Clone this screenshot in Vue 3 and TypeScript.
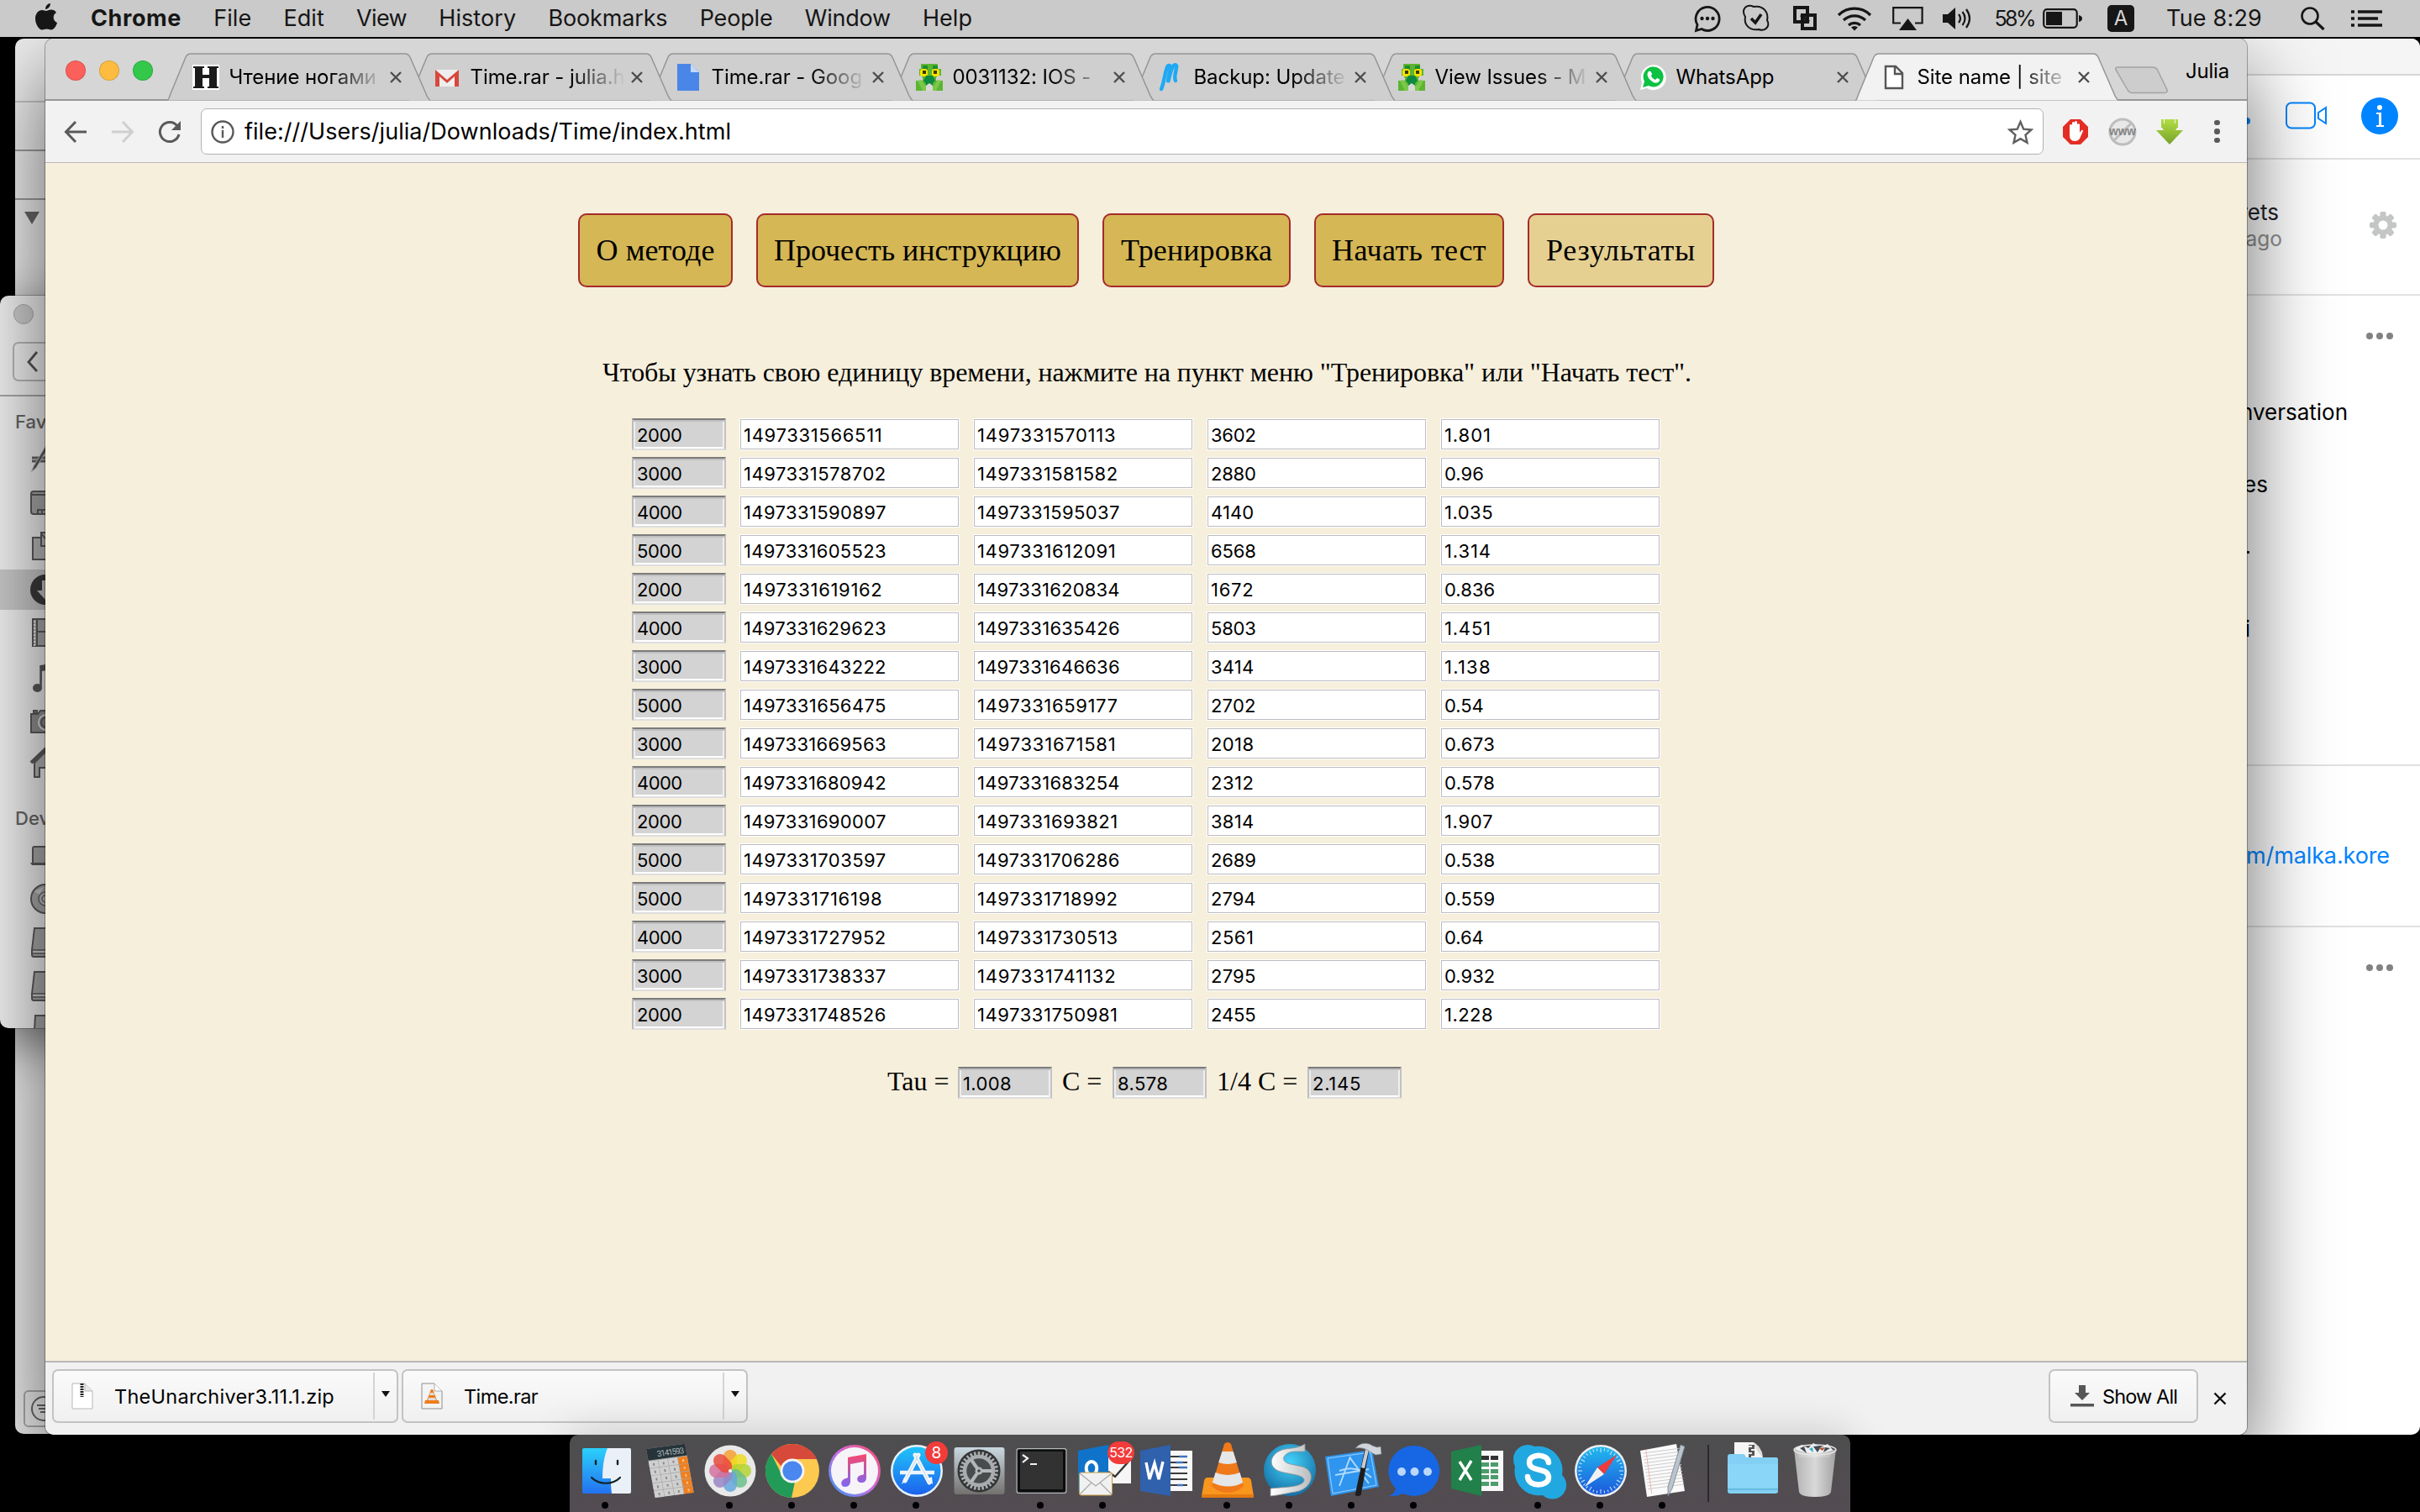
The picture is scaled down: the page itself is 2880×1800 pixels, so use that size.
<script setup lang="ts">
interface MenuItem { label: string; width: number }
interface Tab { title: string; icon: string; active?: boolean }
interface DockApp { name: string; art: string; running?: boolean; badge?: string }

/* Spreads the letters of an element so that its text spans the given width. */
const vFit = {
  mounted(el: HTMLElement, binding: { value: number }) {
    const count = (el.textContent ?? '').trim().length
    if (!count) return
    const natural = el.getBoundingClientRect().width
    el.style.letterSpacing = `${(binding.value - natural) / count}px`
  },
}

/* Width of a number in the form fields: the one and the point are narrower. */
const advance = (value: string): number =>
  [...value].reduce((sum, c) => sum + (c === '.' ? 6.6 : c === '1' ? 11.2 : 13.4), 0)

const menu: MenuItem[] = [
  { label: 'Chrome', width: 108 },
  { label: 'File', width: 45 },
  { label: 'Edit', width: 48.5 },
  { label: 'View', width: 60 },
  { label: 'History', width: 92 },
  { label: 'Bookmarks', width: 142 },
  { label: 'People', width: 87 },
  { label: 'Window', width: 102 },
  { label: 'Help', width: 59 },
]

const mantis = `<path d="M6 0h20v6h4v10h-6v4h8v12H0V20h8v-4H4V6h2z" fill="#5cb531"/><path d="M0 14h7v6H0zM25 14h7v6h-7z" fill="#cfcfcf"/><path d="M8 2h6v6H8zM20 2h6v6h-6zM12 16h8v10h-8z" fill="#1f8d2c"/><rect x="5" y="6" width="9" height="9" rx="3" fill="#f4e300"/><rect x="19" y="6" width="9" height="9" rx="3" fill="#f4e300"/><rect x="8" y="8" width="4" height="4" fill="#3a3a00"/><rect x="21" y="8" width="4" height="4" fill="#3a3a00"/><path d="M12 14h8l3 6-6 6h-3l-5-6z" fill="#0e8a3e"/><path d="M2 20l6 12h8L6 19zM30 20l-6 12h-7l9-13z" fill="#7cc84a"/><path d="M12 26l4-3 4 3v6h-8z" fill="#d8d8d8"/>`

const tabs: Tab[] = [
  { title: 'Чтение ногами', icon: `<rect width="32" height="30" y="1" fill="#fff"/><path d="M1 3h13v2h-2v8h8V5h-2V3h13v2h-2v22h2v2H18v-2h2V17h-8v10h2v2H1v-2h2V5H1z" fill="#1b1b1b"/>` },
  { title: 'Time.rar - julia.h', icon: `<path d="M2 7h28v20H2z" fill="#eee"/><path d="M2 27V7l14 12L30 7v20h-5V15l-9 8-9-8v12z" fill="#d8473b"/>` },
  { title: 'Time.rar - Goog', icon: `<path d="M3 0h16l10 10v22H3z" fill="#4a86e8"/><path d="M19 0l10 10h-10z" fill="#c5d8fa"/>` },
  { title: '0031132: IOS -', icon: mantis },
  { title: 'Backup: Update', icon: `<path d="M5 30C8 24 9 12 12 4c1-3 4-3 4 1-1 6-3 12-3 17C15 15 16 8 19 3c2-3 5-2 4 2-1 6-3 11-1 15" fill="none" stroke="#1fa9f4" stroke-width="4.400" stroke-linecap="round"/>` },
  { title: 'View Issues - M', icon: mantis },
  { title: 'WhatsApp', icon: `<path d="M1 31l2-9A15 15 0 1 1 9 29z" fill="#fff"/><path d="M4 28l2-7a12 12 0 1 1 5 5z" fill="#0dc143"/><path d="M11 9c2-1 3 0 4 3 0 1-1 2-1 2 1 3 3 4 5 5l2-2c2 1 4 1 3 3-2 4-7 3-10 0-4-3-6-8-3-11z" fill="#fff"/>` },
  { title: 'Site name | site', active: true, icon: `<path d="M6 3h12l8 8v18H6zM17 3v9h9" fill="#fff" stroke="#555" stroke-width="2.400"/>` },
]

const pages = [
  { label: 'О методе', width: 184, text: 141 },
  { label: 'Прочесть инструкцию', width: 384, text: 342 },
  { label: 'Тренировка', width: 224, text: 180 },
  { label: 'Начать тест', width: 226, text: 184 },
  { label: 'Результаты', width: 222, text: 178, current: true },
]

const rows: string[][] = [
  ['2000', '1497331566511', '1497331570113', '3602', '1.801'],
  ['3000', '1497331578702', '1497331581582', '2880', '0.96'],
  ['4000', '1497331590897', '1497331595037', '4140', '1.035'],
  ['5000', '1497331605523', '1497331612091', '6568', '1.314'],
  ['2000', '1497331619162', '1497331620834', '1672', '0.836'],
  ['4000', '1497331629623', '1497331635426', '5803', '1.451'],
  ['3000', '1497331643222', '1497331646636', '3414', '1.138'],
  ['5000', '1497331656475', '1497331659177', '2702', '0.54'],
  ['3000', '1497331669563', '1497331671581', '2018', '0.673'],
  ['4000', '1497331680942', '1497331683254', '2312', '0.578'],
  ['2000', '1497331690007', '1497331693821', '3814', '1.907'],
  ['5000', '1497331703597', '1497331706286', '2689', '0.538'],
  ['5000', '1497331716198', '1497331718992', '2794', '0.559'],
  ['4000', '1497331727952', '1497331730513', '2561', '0.64'],
  ['3000', '1497331738337', '1497331741132', '2795', '0.932'],
  ['2000', '1497331748526', '1497331750981', '2455', '1.228'],
]

const totals = [
  { label: 'Tau =', value: '1.008', width: 84 },
  { label: 'C =', value: '8.578', width: 72 },
  { label: '1/4 C =', value: '2.145', width: 120 },
]

const petals = ['#f5a030', '#f0dd20', '#b5d334', '#6cbf8a', '#67a7dc', '#9a86c4', '#d4719f', '#ea4a3c']
  .map((c, i) => `<rect x="24" y="7" width="16" height="25" rx="8" fill="${c}" opacity=".85" transform="rotate(${i * 45} 32 32)"/>`)
  .join('')
const teeth = Array.from({ length: 28 }, (_, i) => `<rect x="30.700" y="9" width="2.600" height="6" fill="#a9acae" transform="rotate(${i * 360 / 28} 32 32)"/>`).join('')
const ticks = Array.from({ length: 36 }, (_, i) => `<rect x="31.5" y="5" width="1" height="${i % 3 ? 3 : 5}" fill="#d5ecff" transform="rotate(${i * 10} 32 32)"/>`).join('')
const calcKeys = [0, 1, 2, 3, 4].map(r => [0, 1, 2, 3].map(c =>
  `<rect x="${c * 12}" y="${15 + r * 9}" width="11.3" height="8.3" fill="${c === 3 ? '#f0801f' : '#cfcfcf'}"/><rect x="${c * 12 + 4.8}" y="${18 + r * 9}" width="2" height="3" fill="${c === 3 ? '#f9c08d' : '#8a8a8a'}"/>`).join('')).join('')
const lines = Array.from({ length: 12 }, (_, i) => `<path d="M5 ${11 + i * 4}h44" stroke="#c9c9c9" stroke-width=".9"/>`).join('')

const apps: DockApp[] = [
  { name: 'finder', running: true, art: `<defs><linearGradient id="fi" x2="0" y2="1"><stop stop-color="#2bd0fb"/><stop offset="1" stop-color="#2372f0"/></linearGradient></defs><rect x="4" y="5" width="58" height="54" rx="2" fill="url(#fi)"/><path d="M34 5h26q2 0 2 2v50q0 2-2 2H39c-1-7-1-12-1-18H28C28 27 30 14 34 5z" fill="#eaf0f8"/><path d="M20 20v4M46 20v4" stroke="#122" stroke-width="2.4" stroke-linecap="round"/><path d="M15 40c9 9 25 9 34 0" fill="none" stroke="#122" stroke-width="2.2" stroke-linecap="round"/>` },
  { name: 'calculator', art: `<g transform="matrix(.97 -.13 .18 .98 6 6)"><rect width="47.5" height="59" fill="#a8a8a8"/><rect width="47.5" height="14" fill="#26343a"/>${calcKeys}<text x="12" y="11" font-size="10" fill="#a9b6b8" font-family="Roboto, sans-serif" textLength="33">3141593</text></g>` },
  { name: 'photos', running: true, art: `<circle cx="32" cy="32" r="30.5" fill="#e9e9e9"/>${petals}<circle cx="32" cy="32" r="2" fill="#fff"/>` },
  { name: 'chrome', running: true, art: `<circle cx="32" cy="32" r="32" fill="#fdc94f"/><path d="M32 0a32 32 0 0 1 29 18H32a14 14 0 0 0-13 9L7 12A32 32 0 0 1 32 0z" fill="#d6493b"/><path d="M7 12l13 26q5 8 15 7L31 64A32 32 0 0 1 7 12z" fill="#229a58"/><circle cx="32" cy="32" r="14.5" fill="#f4f4f4"/><circle cx="32" cy="32" r="11.6" fill="#4a87ee"/>` },
  { name: 'itunes', running: true, art: `<defs><linearGradient id="it" x1="1" y1="0" x2="0" y2="1"><stop stop-color="#fb4f6b"/><stop offset=".5" stop-color="#c96be0"/><stop offset="1" stop-color="#2f9cf8"/></linearGradient><linearGradient id="no" x2="0" y2="1"><stop stop-color="#f9486c"/><stop offset="1" stop-color="#7c68f6"/></linearGradient></defs><circle cx="32" cy="32" r="31" fill="url(#it)"/><circle cx="32" cy="32" r="28" fill="#f6f4f9"/><path d="M24 16l22-4v28c0 4-2 6-6 6-7 0-6-9 1-9l2-1V21l-16 3v20c0 4-2 7-6 7-7 0-6-9 1-10l2-1z" fill="url(#no)"/>` },
  { name: 'appstore', running: true, badge: '8', art: `<defs><linearGradient id="as" x2="0" y2="1"><stop stop-color="#20c4fb"/><stop offset="1" stop-color="#1c62ec"/></linearGradient></defs><circle cx="32" cy="32" r="31" fill="#e9f2fa"/><circle cx="32" cy="32" r="28.5" fill="url(#as)"/><path d="M12 34h41" stroke="#eef5fc" stroke-width="4.5"/><path d="M34 13L18 44M30 13l17 33" stroke="#f4f8fc" stroke-width="5" stroke-linecap="round"/><path d="M34 13L18 44M30 13l17 33" stroke="#b7cbe0" stroke-width=".8"/><path d="M17 40l-3 8 6-5zM44 42l7 6-1-9z" fill="#f4f8fc"/>` },
  { name: 'settings', art: `<defs><linearGradient id="se" x2="0" y2="1"><stop stop-color="#c9d8e0"/><stop offset="1" stop-color="#73716e"/></linearGradient></defs><rect x="2.5" y="4" width="60" height="56" rx="3" fill="url(#se)"/><circle cx="32" cy="32" r="25.500" fill="#333536"/>${teeth}<circle cx="32" cy="32" r="17" fill="#4a4b4c" stroke="#a9acae" stroke-width="4.500"/><path d="M32 32l-9-13M32 32h16M32 32l-9 13" stroke="#b4b7b9" stroke-width="4"/><circle cx="32" cy="32" r="4.500" fill="#b4b7b9"/><circle cx="32" cy="32" r="1.800" fill="#444"/>` },
  { name: 'terminal', running: true, art: `<rect x="2.5" y="5" width="60" height="54" rx="3" fill="#b5bcbc"/><rect x="3.7" y="6.2" width="57.6" height="51.6" rx="2" fill="#0d0d0d"/><rect x="7" y="9" width="51" height="45" fill="#323232"/><path d="M10 13l6 4-6 5M19 24h8" fill="none" stroke="#f2f2f2" stroke-width="2.2"/>` },
  { name: 'outlook', running: true, badge: '532', art: `<path d="M36 11h29v36H36z" fill="#f6f6f6"/><path d="M38 33l8 6 16-18" fill="none" stroke="#333" stroke-width="2.4"/><path d="M2 8l36-7v61L2 56z" fill="#0f74c9"/><ellipse cx="18" cy="29" rx="6.3" ry="8" fill="none" stroke="#fff" stroke-width="4"/><rect x="3.5" y="34" width="39" height="27" rx="2" fill="#f1f1f1" stroke="#c89a3f" stroke-width="1"/><path d="M4 35l19 15 19-15M4 60l14-14M42 60L28 46" fill="none" stroke="#a9a9a9" stroke-width="1.2"/>` },
  { name: 'word', art: `<rect x="36" y="8" width="28" height="48" fill="#f8f8f8"/><path d="M38 15h20M38 22h20M38 28h20M38 35h20M38 42h20M38 49h20" stroke="#3b3b3b" stroke-width="2.2"/><path d="M48 15h10M44 22h9M48 28h10M46 49h7" stroke="#3f74c0" stroke-width="2.4"/><path d="M2 8l36-7v61L2 56z" fill="#2f61ad"/><path d="M9 22l4 20 6-19 5 19 5-21" fill="none" stroke="#fff" stroke-width="3.4"/>` },
  { name: 'vlc', running: true, art: `<path d="M8 40h48q3 0 4 4l3 18q0 2-2 2H3q-2 0-2-2l3-18q1-4 4-4z" fill="#f9961e"/><path d="M1 60h62v2q0 2-2 2H3q-2 0-2-2z" fill="#e57a10"/><path d="M28 0q4-4 8 0l15 50q-8 8-19 8t-19-8z" fill="#f0791a"/><path d="M25.4 9h13.2l4.2 13q-10.800 4-21.600 0zM17.500 34q14.500 6 29 0l3.700 12q-17 9-36.400 0z" fill="#e4e6e8"/>` },
  { name: 'skim', running: true, art: `<defs><radialGradient id="sk" cy=".35" r=".7"><stop stop-color="#45d3fb"/><stop offset="1" stop-color="#11699f"/></radialGradient><linearGradient id="sg"><stop stop-color="#fff"/><stop offset="1" stop-color="#b9bcbe"/></linearGradient></defs><circle cx="32" cy="31" r="31" fill="url(#sk)"/><path d="M50 0v9H37c-13 1-18 12-4 15l14 3c18 6 11 27-8 30-12 2-20 4-30 5V53l23-2c20-2 22-11 8-14l-15-3C2 30 8 9 27 6c9-1 17-2 23-6z" fill="url(#sg)" stroke="#8a8f93" stroke-width=".8"/>` },
  { name: 'xcode', running: true, art: `<path d="M0 15l56-8 8 44-57 11z" fill="#2f95ee"/><path d="M3 17l51-7 7 39-52 10z" fill="none" stroke="#9bd0ff" stroke-width="1"/><path d="M12 37l40-7M17 50l13-35M30 17l22 30M17 32q20-8 38 8" fill="none" stroke="#aedaff" stroke-width="2"/><path d="M47 7l-11 52q-1 3 3 3t4-3L52 9z" fill="#1d1d1d"/><path d="M48 6l4 1-5 22-4-1z" fill="#c8ccd0"/><path d="M36 5c6-7 15-7 20-3l6 2 4-1 1 9-7 1-7-4c-5-4-11-5-17-4z" fill="#cfd5da" stroke="#7d868d" stroke-width=".7"/>` },
  { name: 'messages', running: true, art: `<path d="M32 2a30 30 0 1 1-13 57q-8 4-17 3 7-3 8-9A30 30 0 0 1 32 2z" fill="#1767e4"/><g fill="#b9d8fb"><circle cx="17" cy="33" r="5"/><circle cx="32.500" cy="33" r="5"/><circle cx="48" cy="33" r="5"/></g>` },
  { name: 'excel', art: `<rect x="36" y="8" width="28" height="48" fill="#f8f8f8"/><path d="M38 14h9v5h-9zM49 14h9v5h-9z" fill="#333"/><path d="M38 22h9v5h-9zM49 22h9v5h-9zM38 30h9v5h-9zM49 30h9v5h-9zM38 37h9v5h-9zM49 37h9v5h-9zM38 45h9v5h-9zM49 45h9v5h-9z" fill="#4d9c6c"/><path d="M2 9l36-8v61L2 53z" fill="#22804a"/><path d="M12 21l14 22M26 20L12 43" stroke="#fff" stroke-width="3.400"/>` },
  { name: 'skype', running: true, art: `<path d="M2 18A17 17 0 0 1 27 3a29 29 0 0 1 33 34 16 16 0 0 1-23 24A29 29 0 0 1 4 27q-2-4-2-9z" fill="#22a8e0"/><path d="M44 22c-1-11-23-11-23 0 0 12 23 5 23 18 0 11-24 12-25-1" fill="none" stroke="#fff" stroke-width="6.500" stroke-linecap="round"/>` },
  { name: 'safari', running: true, art: `<defs><linearGradient id="sa" x2="0" y2="1"><stop stop-color="#22b9ee"/><stop offset="1" stop-color="#1b58dc"/></linearGradient></defs><circle cx="32" cy="32" r="31" fill="#eceff1"/><circle cx="32" cy="32" r="28.500" fill="url(#sa)"/>${ticks}<path d="M51 13L28 28l8 8z" fill="#ee3b3b"/><path d="M13 51l15-23 8 8z" fill="#f1f1f1"/>` },
  { name: 'textedit', running: true, art: `<path d="M5 8L48 0l10 56-45 7z" fill="#fafafa"/><g transform="matrix(.98 -.13 .13 .97 2 1)">${lines}<path d="M9 7v54" stroke="#f1a9a9" stroke-width=".8"/></g><path d="M53 1l5 2-15 50-5 9 0-11z" fill="#b9c4cd" stroke="#717c86" stroke-width=".8"/>` },
]

const folderArt = `<path d="M10 -2h23l11 18v10H10z" fill="#f5f5f5"/><path d="M27 1h7v20h-7z" fill="#555"/><path d="M27 3h4M30 7h4M27 11h4M30 15h4" stroke="#eee" stroke-width="2"/><path d="M33 -2q2 9 11 18l-1-6q-4-9-10-12z" fill="#dcdcdc"/><path d="M2 15q0-3 3-3h15q3 0 4 4h36q2 0 2 3v37q0 3-3 3H5q-3 0-3-3z" fill="#83d0f4"/><path d="M2 24h60v28H2z" fill="#8ad6f8"/><path d="M2 54h60" stroke="#5fb4dc" stroke-width="1.500"/>`
const trashArt = `<defs><linearGradient id="tr"><stop stop-color="#b9b9b9"/><stop offset=".5" stop-color="#e3e3e3"/><stop offset="1" stop-color="#a9a9a9"/></linearGradient></defs><path d="M8 6l8-5 8 4 6-6 9 5 8-4 7 8-5 8H13z" fill="#efefef"/><path d="M7 6q25 10 50 0l-6 51q-1 6-19 6t-19-6z" fill="url(#tr)" opacity=".93"/><path d="M14 5l8 6-3-8zM30 3l5 7 5-8zM44 4l-2 6 8-5z" fill="#3f4a55"/><path d="M36 5l5 3 3-4z" fill="#b05a3a"/><path d="M25 6l5 4-1-6z" fill="#38a8c8"/><ellipse cx="32" cy="7" rx="25" ry="6" fill="none" stroke="#e6e6e6" stroke-width="1.500"/>`

const finderIcons = [
  { top: 528, art: `<path d="M2 17h16M2 21h16" stroke="#666" stroke-width="3"/><path d="M20 0L4 27l-3 7 6-5L22 4z" fill="#5b5b5b" stroke="#ccc"/>` },
  { top: 583, art: `<rect x="1" y="2" width="32" height="27" rx="3" fill="#a9a9a9" stroke="#5b5b5b" stroke-width="2"/><path d="M1 6h20M9 29v-5h12M14 24v5" stroke="#5b5b5b" stroke-width="2" fill="none"/>` },
  { top: 633, art: `<path d="M3 7h10v10h12v16H3z" fill="#bbb" stroke="#5b5b5b" stroke-width="2"/><path d="M13 1h14v16H13zM13 2l8 10" fill="#bbb" stroke="#5b5b5b" stroke-width="2"/>` },
  { top: 684, art: `<circle cx="18" cy="18" r="18" fill="#3b3b3b"/><path d="M14 7h8v12h6L18 30 8 19h6z" fill="#c4c4c4"/>` },
  { top: 736, art: `<path d="M3 1h30v32H3zM8 1v32M8 16h20" fill="#aaa" stroke="#5b5b5b" stroke-width="2"/><path d="M5 3v30" stroke="#eee" stroke-width="2" stroke-dasharray="2 2"/>` },
  { top: 790, art: `<path d="M12 2l18-3v7L14 9v19" fill="#5b5b5b"/><path d="M12.500 2v26" stroke="#5b5b5b" stroke-width="2.500"/><ellipse cx="8.500" cy="29" rx="5.500" ry="5" fill="#5b5b5b"/>` },
  { top: 845, art: `<path d="M4 1h4v3H4zM1 5h8l3-4h16v26H1z" fill="#909090" stroke="#5b5b5b" stroke-width="2"/><circle cx="19" cy="15" r="9" fill="#888" stroke="#ddd" stroke-width="2"/><circle cx="19" cy="15" r="6" fill="none" stroke="#555" stroke-width="1.500"/>` },
  { top: 892, art: `<path d="M5 16v17h6V22h12V8L18 3z" fill="#b5b5b5" stroke="#5b5b5b" stroke-width="2"/><path d="M1 16L20-2" stroke="#5b5b5b" stroke-width="4"/>` },
  { top: 1006, art: `<path d="M3 22V4q0-2 2-2h20v20" fill="#aaa" stroke="#5b5b5b" stroke-width="2"/><path d="M0 21h30v3H2z" fill="#5b5b5b"/>` },
  { top: 1052, art: `<circle cx="18" cy="18" r="17" fill="#a9a9a9" stroke="#5b5b5b" stroke-width="2"/><circle cx="18" cy="18" r="8" fill="#bbb" stroke="#666" stroke-width="1.500"/><circle cx="18" cy="18" r="4" fill="none" stroke="#666" stroke-width="1.500"/><path d="M5 9l6 4 5-9" fill="#ccc"/>` },
  { top: 1103, art: `<path d="M5 2h22v34H4q-2 0-2-3v-5z" fill="#aaa" stroke="#5b5b5b" stroke-width="2"/><path d="M3 28h22v4H3" fill="#ccc" stroke="#5b5b5b" stroke-width="1.500"/>` },
  { top: 1155, art: `<path d="M5 2h22v34H4q-2 0-2-3v-5z" fill="#aaa" stroke="#5b5b5b" stroke-width="2"/><path d="M3 28h22v4H3" fill="#ccc" stroke="#5b5b5b" stroke-width="1.500"/>` },
  { top: 1207, art: `<path d="M6 2h22v34H4z" fill="#aaa" stroke="#5b5b5b" stroke-width="2"/>` },
]
</script>

<template>
  <div class="desktop">
    <header class="menubar">
      <svg class="apple" width="26" height="32" viewBox="0 0 26 32"><path d="M18 0c0 4-3 7-6 7 0-4 3-7 6-7zM13 9c1 0 3-1.500 6-1.500 2 0 5 1 6 3.500-5 3-4 10 1 12-1 4-4 8.500-7 8.500-2 0-3-1-5.500-1S10 31.500 8 31.500C4 31.500 0 24 0 18S4 8 8 8c2 0 4 1 5 1z" fill="#161616" /></svg>
      <nav class="menu">
        <span v-for="(m, i) in menu" :key="m.label" v-fit="m.width" :class="{ strong: i === 0 }">{{ m.label }}</span>
      </nav>
      <div class="status">
        <svg width="32" height="32" viewBox="0 0 32 32"><path d="M2.500 30.500l1.500-7A14 14 0 1 1 9 28.500z" fill="none" stroke="#161616" stroke-width="2.800" /><g fill="#161616"><circle cx="9.500" cy="16" r="2.200" /><circle cx="16" cy="16" r="2.200" /><circle cx="22.500" cy="16" r="2.200" /></g></svg>
        <svg style="margin-left: 26px" width="32" height="32" viewBox="0 0 32 32"><path d="M1 8C1 2 7-1 13 2c12-2 18 7 16 16 4 7-2 14-10 11C8 31 1 23 3 14Q1 11 1 8z" fill="none" stroke="#161616" stroke-width="2" /><path d="M10 16l5 5 7-10" fill="none" stroke="#161616" stroke-width="3.600" /></svg>
        <svg style="margin-left: 28px" width="29" height="30" viewBox="0 0 29 30"><path d="M2 2h15v17H2zM11 11h15v16H11z" fill="none" stroke="#161616" stroke-width="4" /><path d="M9 11l10 8" stroke="#161616" stroke-width="3" /></svg>
        <svg style="margin-left: 23px" width="42" height="30" viewBox="0 0 42 30"><g fill="none" stroke="#161616" stroke-width="3.200"><path d="M2 11a27 27 0 0 1 38 0" /><path d="M8 17a19 19 0 0 1 26 0" /><path d="M14 23a10.500 10.500 0 0 1 14 0" /></g><path d="M17 25.500q4-3 8 0l-4 4z" fill="#161616" /></svg>
        <svg style="margin-left: 24px" width="37" height="28" viewBox="0 0 37 28"><path d="M10 19.500H1.200V1.200h34.400v18.300H27" fill="none" stroke="#161616" stroke-width="2.200" /><path d="M18.500 14L29 28H8z" fill="#161616" /></svg>
        <svg style="margin-left: 23px" width="33" height="26" viewBox="0 0 33 26"><path d="M0 8h6l9-8v26l-9-8H0z" fill="#161616" /><g fill="none" stroke="#161616" stroke-width="2.200"><path d="M19 8q4 5 0 10M23.500 5q6 8 0 16" /><path d="M28 2q8 11 0 22" /></g></svg>
        <span v-fit="47.5" class="pct" style="margin-left: 29px">58%</span>
        <svg style="margin-left: 10px" width="47" height="24" viewBox="0 0 47 24"><rect x="1.200" y="1.200" width="39.500" height="21.600" rx="4" fill="none" stroke="#161616" stroke-width="2.200" /><rect x="4" y="4" width="19" height="16" fill="#161616" /><path d="M43 8q4 1 4 4t-4 4z" fill="#161616" /></svg>
        <span class="lang">A</span>
        <span v-fit="114" class="clock">Tue 8:29</span>
        <svg style="margin-left: 46px" width="29" height="28" viewBox="0 0 29 28"><circle cx="11" cy="11" r="9.500" fill="none" stroke="#161616" stroke-width="2.600" /><path d="M18 18l9.500 9" stroke="#161616" stroke-width="3.200" /></svg>
        <svg style="margin-left: 31px" width="37" height="20" viewBox="0 0 37 20"><path d="M0 2h4M8 2h29M0 10h4M8 10h24M0 18h4M8 18h29" stroke="#161616" stroke-width="3.600" /></svg>
      </div>
    </header>

    <section class="window mail">
      <i class="rule" /><i class="rule dark" />
      <i class="tri" />
      <svg class="filter" width="40" height="44" viewBox="0 0 40 44"><rect x="1" y="1" width="60" height="42" rx="5" fill="none" stroke="#a9a9a9" stroke-width="2" /><circle cx="24" cy="22" r="14" fill="none" stroke="#666" stroke-width="2" /><path d="M16 18h20M18 22h16M20 26h14" stroke="#666" stroke-width="2" /></svg>
    </section>

    <section class="window finder">
      <i class="light" />
      <svg class="back" width="60" height="48" viewBox="0 0 60 48"><rect x="1" y="1" width="70" height="45" rx="6" fill="none" stroke="#b5b5b5" stroke-width="2" /><path d="M29 12L19 24l10 11" fill="none" stroke="#555" stroke-width="2.800" /></svg>
      <i class="line" />
      <i class="selected" />
      <span class="group fav">Fav</span>
      <span class="group dev">Dev</span>
      <svg v-for="f in finderIcons" :key="f.top" class="side" :style="{ top: f.top - 352 + 'px' }" width="36" height="38" viewBox="0 0 36 38" v-html="f.art" />
    </section>

    <section class="window chat">
      <div class="chat-title" />
      <div class="chat-bar">
        <i class="tip" />
        <svg width="52" height="34" viewBox="0 0 52 34"><rect x="2" y="1.500" width="34" height="30" rx="6" fill="none" stroke="#0084ff" stroke-width="2" /><path d="M40 13l9-6v19l-9-6z" fill="none" stroke="#0084ff" stroke-width="2" /></svg>
        <svg class="info" width="44" height="44" viewBox="0 0 44 44"><circle cx="22" cy="22" r="22" fill="#0084ff" /><circle cx="22" cy="12" r="3" fill="#fff" /><path d="M18 18h6v15h3v2h-9v-2h3V20h-3z" fill="#fff" /></svg>
      </div>
      <div class="chat-who">
        <div class="names"><span class="who">rets</span><span class="ago">ago</span></div>
        <svg width="32" height="32" viewBox="-16 -16 32 32"><g fill="#c4c6c6"><rect v-for="n in 8" :key="n" x="-3.600" y="-16" width="7.200" height="9" rx="2" :transform="`rotate(${n * 45})`" /></g><circle r="8.500" fill="none" stroke="#c4c6c6" stroke-width="6" /></svg>
      </div>
      <div class="chat-options">
        <span class="dots"><i /><i /><i /></span>
        <span class="opt o1" v-fit="128">nversation</span>
        <span class="opt o2">es</span>
        <i class="mark" />
        <span class="opt o3">i</span>
      </div>
      <div class="chat-link"><span v-fit="171">m/malka.kore</span></div>
      <div class="chat-more"><span class="dots"><i /><i /><i /></span></div>
    </section>

    <main class="window browser">
      <div class="strip">
        <div class="lights"><i class="red" /><i class="amber" /><i class="green" /></div>
        <div class="tabs">
          <div v-for="(t, i) in tabs" :key="i" class="tab" :class="{ active: t.active }" :style="{ zIndex: t.active ? 20 : 10 - i }">
            <svg class="shape" width="313" height="57" viewBox="0 0 313 57"><path d="M0 56.500C2 56 2 54 3 51L22 5Q24 1 28 1H283Q287 1 289 5L309 51Q311 55 313 56.500" /></svg>
            <svg class="favicon" width="32" height="32" viewBox="0 0 32 32" v-html="t.icon" />
            <span class="title" :class="{ whole: t.title === 'WhatsApp' }">{{ t.title }}</span>
            <svg class="close" width="16" height="16" viewBox="0 0 16 16"><path d="M2 2l12 12M14 2L2 14" stroke="#4d4d4d" stroke-width="2.400" /></svg>
          </div>
          <svg class="newtab" width="66" height="33" viewBox="0 0 66 33"><path d="M5 1H46Q50 1 52 5L63 28Q64 31.500 60 31.500H22Q18 31.500 16 28L2 4Q1 1 5 1z" fill="#cdcdcd" stroke="#a2a2a2" stroke-width="1.500" /></svg>
        </div>
        <span v-fit="52" class="profile">Julia</span>
      </div>
      <div class="toolbar">
        <svg class="nav" width="28" height="28" viewBox="0 0 28 28"><path d="M14 2L2.500 14 14 26M3 14h24" fill="none" stroke="#5a5a5a" stroke-width="3" /></svg>
        <svg class="nav fwd" width="28" height="28" viewBox="0 0 28 28"><path d="M14 2l11.500 12L14 26M25 14H1" fill="none" stroke="#cfcfcf" stroke-width="3" /></svg>
        <svg class="nav rel" width="28" height="28" viewBox="0 0 28 28"><path d="M23 7A11.500 11.500 0 1 0 25 17" fill="none" stroke="#5a5a5a" stroke-width="3" /><path d="M27 1v11H16z" fill="#5a5a5a" /></svg>
        <div class="omnibox">
          <svg width="28" height="28" viewBox="0 0 28 28"><circle cx="14" cy="14" r="12.500" fill="none" stroke="#5a5a5a" stroke-width="2.400" /><path d="M14 12v9M14 7v3" stroke="#5a5a5a" stroke-width="2.400" /></svg>
          <span v-fit="579" class="url">file:///Users/julia/Downloads/Time/index.html</span>
          <svg class="star" width="31" height="30" viewBox="0 0 31 30"><path d="M15.500 3l3.700 8.700 9.300.8-7 6.200 2 9.200-8-4.800-8 4.800 2-9.200-7-6.200 9.300-.8z" fill="none" stroke="#5f5f5f" stroke-width="2.400" /></svg>
        </div>
        <div class="ext">
          <svg width="32" height="32" viewBox="0 0 32 32"><path d="M10 1h12l9 9v12l-9 9H10l-9-9V10z" fill="#e32d24" /><path d="M9 14V8q1.500-2 3 0V5q1.500-2 3 0V4q1.500-2 3 0v3q2-1.500 3 0v10l2-3q2-1 2 1l-4 9q-2 3-6 3-6 0-6-7z" fill="#fff" /></svg>
          <svg width="34" height="34" viewBox="0 0 34 34"><circle cx="17" cy="17" r="15" fill="#e8e8e8" stroke="#bdbdbd" stroke-width="3" /><path d="M27 7L7 27" stroke="#bdbdbd" stroke-width="3" /><text x="1" y="21" font-size="14" font-weight="700" fill="#858585" textLength="32" lengthAdjust="spacingAndGlyphs" font-family="Liberation Sans, sans-serif">www</text></svg>
          <svg width="32" height="32" viewBox="0 0 32 32"><defs><linearGradient id="dl" x2="0" y2="1"><stop stop-color="#b2de45" /><stop offset="1" stop-color="#77a22a" /></linearGradient></defs><path d="M6 1h3v5h1V1h12v5h1V1h3v10h-1l-2 3h9L16 31 0 14h9l-2-3H6z" fill="url(#dl)" /></svg>
          <span class="more"><i /><i /><i /></span>
        </div>
      </div>

      <article class="page">
        <nav class="buttons">
          <a v-for="p in pages" :key="p.label" :class="{ current: p.current }" :style="{ width: p.width + 'px' }"><span v-fit="p.text">{{ p.label }}</span></a>
        </nav>
        <p class="hint"><span v-fit="1296">Чтобы узнать свою единицу времени, нажмите на пункт меню "Тренировка" или "Начать тест".</span></p>
        <div class="grid">
          <div v-for="(r, i) in rows" :key="i" class="row">
            <div v-for="(c, j) in r" :key="j" :class="j === 0 ? 'locked' : 'field'"><span v-fit="advance(c)">{{ c }}</span></div>
          </div>
        </div>
        <div class="totals">
          <template v-for="t in totals" :key="t.label">
            <label :style="{ width: t.width + 'px' }">{{ t.label }}</label>
            <div class="locked"><span v-fit="advance(t.value)">{{ t.value }}</span></div>
          </template>
        </div>
      </article>

      <footer class="shelf">
        <div class="download">
          <svg width="26" height="32" viewBox="0 0 26 32"><path d="M1 1h15l9 9v21H1z" fill="#fff" stroke="#b8b8b8" /><path d="M16 1v9h9" fill="#e9e9e9" stroke="#b8b8b8" /><path d="M12.500 1v16" stroke="#222" stroke-width="4" stroke-dasharray="2 1" /></svg>
          <span v-fit="262">TheUnarchiver3.11.1.zip</span>
          <i class="caret" />
        </div>
        <div class="download">
          <svg width="26" height="32" viewBox="0 0 26 32"><path d="M1 1h15l9 9v21H1z" fill="#f4f4f4" stroke="#8d8d8d" /><path d="M16 1v9h9" fill="#fff" stroke="#aaa" /><path d="M12 8h2l5 13h2l1 4H4l1-4h2z" fill="#ee7d1c" /><path d="M11 12h4l1 3h-6zM9 18h8l1 3H8z" fill="#ddd" /></svg>
          <span v-fit="88">Time.rar</span>
          <i class="caret" />
        </div>
        <div class="showall">
          <svg width="28" height="26" viewBox="0 0 28 26"><path d="M10 0h8v9h5l-9 9-9-9h5zM0 22h28v3.500H0z" fill="#565656" /></svg>
          <span v-fit="89">Show All</span>
        </div>
        <svg class="dismiss" width="16" height="16" viewBox="0 0 16 16"><path d="M1.500 1.500l13 13M14.500 1.500l-13 13" stroke="#111" stroke-width="2.400" /></svg>
      </footer>
    </main>

    <div class="dock">
      <div v-for="a in apps" :key="a.name" class="app">
        <svg width="64" height="64" viewBox="0 0 64 64" v-html="a.art" />
        <b v-if="a.badge" :class="{ wide: a.badge.length > 1 }">{{ a.badge }}</b>
        <i v-if="a.running" />
      </div>
      <span class="sep" />
      <div class="app"><svg width="64" height="64" viewBox="0 0 64 64" v-html="folderArt" /></div>
      <div class="app"><svg width="64" height="64" viewBox="0 0 64 64" v-html="trashArt" /></div>
    </div>
  </div>
</template>

<style>
body { margin: 0; background: #000; }
</style>

<style scoped>
.desktop { position: relative; width: 2880px; height: 1800px; overflow: hidden; background: #000; font-family: Inter, "Liberation Sans", sans-serif; color: #000; }
.desktop * { box-sizing: border-box; }
svg { display: block; overflow: visible; flex: none; }
span { white-space: nowrap; }
.window { position: absolute; overflow: hidden; }

.menubar { position: relative; z-index: 5; height: 44px; display: flex; align-items: center; background: #cacaca; color: #161616; font-size: 27px; line-height: 44px; }
.apple { margin: -4px 0 0 42px; }
.menu { display: flex; gap: 38.2px; margin-left: 40px; }
.strong { font-weight: 700; }
.status { display: flex; align-items: center; margin-left: auto; padding-right: 45px; }
.pct { font-size: 25px; }
.lang { width: 32px; height: 32px; margin-left: 30px; border-radius: 5px; background: #161616; color: #d5d5d5; font-size: 24px; line-height: 32px; text-align: center; }
.clock { margin-left: 38px; }

.mail { left: 18px; top: 46px; width: 60px; height: 1661px; border-radius: 10px; background: #ececec; }
.mail .rule { display: block; height: 2px; margin-top: 74px; background: #c2c2c2; }
.mail .rule.dark { margin-top: 56px; background: #9a9a9a; }
.mail .rule.dark { box-shadow: 0 58px 0 #9a9a9a; }
.mail .tri { display: block; margin: 72px 0 0 11px; width: 0; border: 9px solid transparent; border-top: 15px solid #666; border-bottom: 0; }
.filter { position: absolute; left: 10px; bottom: 8px; }

.finder { left: 0; top: 352px; width: 120px; height: 872px; border-radius: 10px; background: #efefef; box-shadow: 0 0 0 1px rgba(0,0,0,.25), 0 16px 60px rgba(0,0,0,.55); }
.finder .light { position: absolute; left: 16px; top: 10px; width: 24px; height: 24px; border-radius: 50%; background: #ccc; border: 1px solid #aaa; }
.finder .back { position: absolute; left: 15px; top: 55px; }
.finder .line { position: absolute; left: 0; right: 0; top: 118px; height: 2px; background: #a5a5a5; }
.finder .selected { position: absolute; left: 0; right: 0; top: 326px; height: 48px; background: #c8c8c8; }
.group { position: absolute; left: 18px; font-size: 22px; font-weight: 500; line-height: 28px; color: #666; }
.fav { top: 136px; }
.dev { top: 608px; }
.side { position: absolute; left: 36px; }

.chat { left: 2500px; top: 46px; width: 380px; height: 1662px; border-radius: 10px; background: #fff; }
.chat-title { height: 44px; background: #f5f5f5; border-bottom: 2px solid #d6d6d6; }
.chat-bar { display: flex; align-items: center; height: 100px; padding: 0 26px 2px 170px; border-bottom: 2px solid #e1e1e1; }
.chat-bar .tip { width: 8px; height: 8px; margin: 12px 41px 0 0; border-radius: 50%; background: #0084ff; }
.chat-bar .info { margin: -1px 0 0 auto; }
.chat-who { display: flex; justify-content: flex-end; gap: 108px; height: 162px; padding: 46px 28px 0 0; border-bottom: 2px solid #e1e1e1; }
.chat-who svg { margin-top: 16px; }
.names { display: flex; flex-direction: column; align-items: flex-end; width: 200px; font-size: 26px; line-height: 34px; }
.who { color: #1d2129; }
.names .ago { font-size: 24.500px; line-height: 28px; margin: 0 -4px 0 0; color: #8f8f8f; }
.dots { display: flex; gap: 4px; justify-content: flex-end; padding-right: 32px; }
.dots i { width: 8px; height: 8px; border-radius: 50%; background: #828282; }
.chat-options { display: flex; flex-direction: column; align-items: flex-end; height: 560px; padding-top: 44px; border-bottom: 2px solid #e1e1e1; font-size: 26px; line-height: 36px; }
.o1 { margin: 69px 86px 0 0; }
.o2 { margin: 50px 181px 0 0; }
.mark { width: 12px; height: 3px; margin: 61px 203px 0 0; background: #222; }
.o3 { margin: 72px 202px 0 0; }
.chat-link { height: 192px; padding: 89px 36px 0 0; border-bottom: 2px solid #e1e1e1; color: #0084ff; font-size: 27px; line-height: 36px; text-align: right; }
.chat-more { padding-top: 44px; }

.browser { left: 54px; top: 46px; width: 2620px; height: 1662px; display: flex; flex-direction: column; border-radius: 10px; background: #f2f2f2; box-shadow: 0 0 0 1px rgba(0,0,0,.3), 0 40px 100px rgba(0,0,0,.6); }
.strip { display: flex; height: 74px; background: #d6d6d6; border-bottom: 2px solid #989898; }
.lights { display: flex; gap: 16px; width: 145px; padding: 26px 0 0 23.500px; }
.lights i { width: 24px; height: 24px; border-radius: 50%; border: 1px solid rgba(0,0,0,.14); }
.red { background: #fc605b; }
.amber { background: #fdbc40; }
.green { background: #34c84a; }
.tabs { position: relative; display: flex; padding-top: 17px; }
.tab { position: relative; display: flex; width: 313px; height: 57px; margin-right: -26px; padding-left: 31px; }
.shape { position: absolute; left: 0; top: 0; fill: #cfcfcf; stroke: #959595; stroke-width: 1.5px; }
.active .shape { fill: #f2f2f2; }
.favicon { position: relative; margin: 13px 0 0 -1px; }
.title { position: relative; width: 187px; margin-left: 11.500px; overflow: hidden; font-size: 24px; letter-spacing: -.08px; line-height: 57px; -webkit-mask-image: linear-gradient(90deg, #000 120px, transparent 184px); mask-image: linear-gradient(90deg, #000 120px, transparent 184px); }
.title.whole { -webkit-mask-image: none; mask-image: none; }
.close { position: relative; margin: 21px 0 0 3.500px; }
.newtab { margin: 16px 0 0 21px; }
.profile { margin: 26px 21px 0 auto; font-size: 24px; line-height: 26px; }
.toolbar { display: flex; align-items: center; height: 74px; padding-left: 22px; background: #f2f2f2; border-bottom: 1px solid #b9b9b9; }
.fwd { margin-left: 28px; }
.rel { margin-left: 28px; }
.omnibox { display: flex; align-items: center; width: 2193px; height: 55px; margin-left: 23px; padding: 0 11px; background: #fff; border: 1.5px solid #b2b2b2; border-radius: 7px; }
.url { margin-left: 12px; font-size: 27px; line-height: 54px; }
.star { margin-left: auto; }
.ext { display: flex; align-items: center; gap: 23px; margin-left: 22px; }
.more { display: flex; flex-direction: column; gap: 4px; margin-left: 14px; }
.more i { width: 6.500px; height: 6.500px; border-radius: 50%; background: #5a5a5a; }

.page { flex: 1; background: #f6efdc; font-family: "Liberation Serif", serif; }
.buttons { display: flex; gap: 28px; padding: 60px 0 0 634px; }
.buttons a { height: 88px; border: 2px solid #a52a2a; border-radius: 10px; background: #d5b755; font-size: 36px; line-height: 84px; text-align: center; white-space: nowrap; }
.buttons .current { background: #e5d092; }
.hint { margin: 82px 0 0 663px; font-size: 32px; line-height: 38px; }
.hint span { display: inline-block; }
.grid { display: flex; flex-direction: column; gap: 8px; margin: 36px 0 0 698px; }
.row { display: flex; gap: 16px; }
.locked, .field { height: 38px; font-family: Inter, sans-serif; font-size: 22px; line-height: 34px; }
.locked { width: 112px; padding: 1px 0 0 4px; border: 2px solid; border-color: #7b7b7b #c2c2c2 #dedede #bcbcbc; background: #d3d3d3; box-shadow: inset 0 2px #c0c0c0, inset 2px 0 #ededed, inset -2px 0 #efefef, inset 0 -2px #fff; }
.field { width: 262px; padding: 2px 0 0 4px; background: #fff; border: 1px solid #fff; box-shadow: inset 0 0 0 1px #bcbcc2; }
.totals { display: flex; padding: 44px 0 0 1002px; font-size: 32px; }
.totals label { line-height: 34px; white-space: nowrap; }
.totals .locked + label { padding-left: 12px; }

.shelf { display: flex; height: 88px; padding: 8px 24px 0 8px; background: #f1f1f1; border-top: 2px solid #b9b7b9; }
.download { position: relative; display: flex; align-items: center; width: 412px; height: 64px; margin-right: 4px; padding-left: 21px; border: 2px solid #c3c3c3; border-radius: 7px; background: linear-gradient(#fafafa, #f0f0f0); font-size: 23.500px; }
.download span { margin-left: 25px; }
.download::after { content: ""; width: 2px; height: 56px; position: absolute; right: 26px; top: 2px; background: #d4d4d4; }
.caret { position: absolute; right: 8px; top: 24px; border: 5px solid transparent; border-top: 7px solid #111; border-bottom: 0; }
.showall { display: flex; align-items: center; width: 178px; height: 64px; margin-left: auto; padding-left: 24px; border: 2px solid #c3c3c3; border-radius: 7px; background: linear-gradient(#fafafa, #f0f0f0); font-size: 23.500px; }
.showall span { margin-left: 10px; }
.dismiss { margin: 27px 0 0 18px; }

.dock { position: absolute; left: 678px; top: 1708px; display: flex; width: 1524px; height: 92px; padding-left: 5px; border-radius: 10px 10px 0 0; background: linear-gradient(#4d4d4e, #534c52); box-shadow: 0 0 50px rgba(0,0,0,.18); }
.app { position: relative; width: 74px; padding: 11px 4px 0 6px; }
.app i { position: absolute; left: 33px; top: 80px; width: 8px; height: 8px; border-radius: 50%; background: #000; }
.app b { position: absolute; left: 48px; top: 8px; width: 27px; height: 27px; border-radius: 14px; background: #f23c3a; color: #fff; font-size: 19px; font-weight: 400; line-height: 27px; text-align: center; }
.app b.wide { left: 43px; width: 32px; font-size: 16px; letter-spacing: -.6px; }
.sep { width: 2px; height: 68px; margin: 12px 14px 0 17px; background: #2b292b; }
</style>
